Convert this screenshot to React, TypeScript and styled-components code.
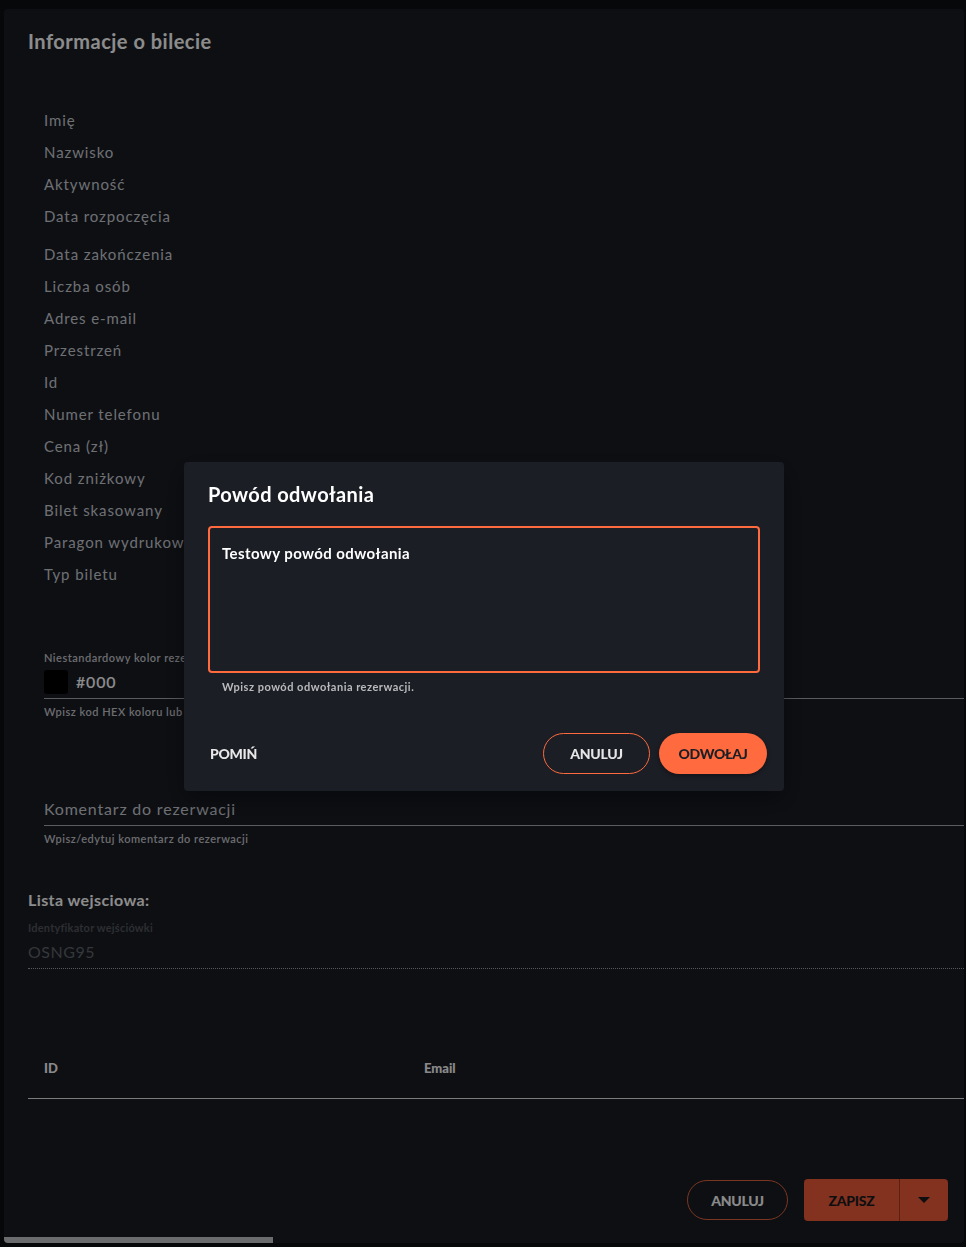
import React from "react";
import styled, { createGlobalStyle } from "styled-components";

const GlobalStyle = createGlobalStyle`
  html, body { margin: 0; padding: 0; background: #0d0f12; }
  body { font-family: Lato, "Noto Sans", "Liberation Sans", sans-serif; }
  * { box-sizing: border-box; }
`;

const Page = styled.div`
  height: 1247px;
  padding: 9px 2px 4px 4px;
  overflow: hidden;
`;

const Panel = styled.main`
  height: 100%;
  background: #1a1c23;
  border-radius: 4px;
  display: flex;
  flex-direction: column;
  overflow: hidden;
`;

const Header = styled.h1`
  margin: 0;
  padding: 20px 24px 0;
  font-size: 20px;
  line-height: 24px;
  font-weight: 700;
  letter-spacing: 0.5px;
  color: #ffffff;
`;

const Details = styled.section`
  margin-top: 51px;
  padding: 0 40px;
  display: flex;
  flex-direction: column;
`;

const DetailRow = styled.div<{ $tall?: boolean }>`
  height: ${(p) => (p.$tall ? 38 : 32)}px;
  display: flex;
  align-items: ${(p) => (p.$tall ? "flex-start" : "center")};
  padding-top: ${(p) => (p.$tall ? 6 : 0)}px;
  font-size: 15px;
  line-height: 20px;
  color: #c8ccd4;
  letter-spacing: 0.9px;
`;

const FieldBlock = styled.div<{ $top: number }>`
  margin-top: ${(p) => p.$top}px;
  padding-left: 40px;
  display: flex;
  flex-direction: column;
`;

const SmallLabel = styled.div`
  font-size: 11px;
  line-height: 14px;
  color: #c3c6cc;
  font-weight: 600;
  letter-spacing: 0.5px;
`;

const InputLine = styled.div`
  display: flex;
  align-items: center;
  gap: 8px;
  margin-top: 5px;
  padding-bottom: 4px;
  border-bottom: 1px solid #a4a8ae;
`;

const Swatch = styled.div<{ $color: string }>`
  width: 24px;
  height: 24px;
  border-radius: 3px;
  background: ${(p) => p.$color};
`;

const InputValue = styled.span`
  font-size: 16px;
  line-height: 20px;
  color: #fbfdff;
  font-weight: 600;
  letter-spacing: 0.8px;
`;

const Helper = styled.div`
  margin-top: 6px;
  font-size: 11px;
  line-height: 14px;
  color: #c3c6cc;
  font-weight: 600;
  letter-spacing: 0.5px;
`;

const Placeholder = styled.div`
  font-size: 16px;
  line-height: 20px;
  color: #c8ccd4;
  letter-spacing: 0.8px;
  padding-bottom: 6px;
  border-bottom: 1px solid #a4a8ae;
`;

const ListSection = styled.section`
  margin-top: 44px;
  padding: 0 0 0 24px;
  display: flex;
  flex-direction: column;
`;

const ListTitle = styled.h2`
  margin: 0;
  font-size: 16px;
  line-height: 20px;
  font-weight: 700;
  letter-spacing: 0.4px;
  color: #ffffff;
`;

const DimLabel = styled.div`
  margin-top: 11px;
  font-size: 11px;
  line-height: 14px;
  color: #51555c;
  font-weight: 700;
  letter-spacing: 0.2px;
`;

const DimValue = styled.div`
  margin-top: 7px;
  font-size: 16px;
  line-height: 20px;
  color: #60656c;
  padding-bottom: 6px;
  border-bottom: 1px dotted #9ca0a8;
  letter-spacing: 0.5px;
`;

const Table = styled.div`
  margin-top: 91px;
  display: grid;
  grid-template-columns: 380px 1fr;
  padding: 0 16px 0 16px;
  height: 39px;
  align-items: start;
  border-bottom: 1px solid #e2e2e2;
`;

const Th = styled.div`
  font-size: 13px;
  line-height: 16px;
  font-weight: 900;
  color: #fafafa;
`;

const Footer = styled.div`
  margin-top: auto;
  display: flex;
  justify-content: flex-end;
  align-items: center;
  gap: 16px;
  padding: 0 16px 16px;
`;

const OutlineButton = styled.button<{ $w: number; $h: number; $dim?: boolean }>`
  width: ${(p) => p.$w}px;
  height: ${(p) => p.$h}px;
  border-radius: ${(p) => p.$h / 2}px;
  border: 1px solid ${(p) => (p.$dim ? "#e0633f" : "#ff6a3e")};
  background: transparent;
  color: ${(p) => (p.$dim ? "#fbfbfb" : "#e6e6e6")};
  font-family: inherit;
  font-size: 14px;
  font-weight: 900;
  letter-spacing: -0.3px;
  text-transform: uppercase;
  cursor: pointer;
`;

const Split = styled.div`
  display: flex;
  height: 42px;
  border-radius: 4px;
  overflow: hidden;
  background: #ef5b39;
`;

const SplitMain = styled.button`
  width: 96px;
  border: 0;
  background: transparent;
  color: #1a1b1f;
  font-family: inherit;
  font-size: 14px;
  font-weight: 900;
  letter-spacing: -0.3px;
  border-right: 1px solid #a93a22;
`;

const SplitCaret = styled.button`
  width: 48px;
  border: 0;
  background: transparent;
  display: flex;
  align-items: center;
  justify-content: center;
`;

const Scrollbar = styled.div`
  height: 6px;
  width: 269px;
  background: #c3c5c9;
  flex-shrink: 0;
`;

const Backdrop = styled.div`
  position: fixed;
  inset: 0;
  background: rgba(0, 0, 0, 0.45);
  display: flex;
  align-items: center;
  justify-content: center;
  padding: 6px 0 0 2px;
`;

const Modal = styled.div`
  width: 600px;
  height: 329px;
  background: #1b1e25;
  border-radius: 4px;
  padding: 20px 24px 17px;
  display: flex;
  flex-direction: column;
  box-shadow: 0 8px 24px rgba(0, 0, 0, 0.4);
`;

const ModalTitle = styled.h3`
  margin: 0;
  font-size: 20px;
  line-height: 24px;
  font-weight: 700;
  letter-spacing: 0.4px;
  color: #ffffff;
`;

const Reason = styled.div`
  margin-top: 20px;
  height: 147px;
  border: 2px solid #ff6a3e;
  border-radius: 4px;
  padding: 16px 12px;
  font-size: 15px;
  line-height: 18px;
  font-weight: 700;
  letter-spacing: 0.4px;
  color: #ffffff;
`;

const ModalHelper = styled.div`
  margin-top: 7px;
  padding-left: 14px;
  font-size: 11px;
  line-height: 14px;
  font-weight: 700;
  letter-spacing: 0.5px;
  color: #b9babd;
`;

const Actions = styled.div`
  margin: auto -7px 0 2px;
  display: flex;
  align-items: center;
  gap: 9px;
`;

const TextButton = styled.button`
  margin-right: auto;
  border: 0;
  padding: 0;
  background: transparent;
  color: #e8e8e8;
  font-family: inherit;
  font-size: 14px;
  font-weight: 900;
  letter-spacing: -0.3px;
`;

const FilledButton = styled.button`
  width: 108px;
  height: 41px;
  border-radius: 21px;
  border: 0;
  background: #ff6a3e;
  color: #1b1e25;
  font-family: inherit;
  font-size: 14px;
  font-weight: 900;
  letter-spacing: -0.3px;
  box-shadow: 0 2px 4px rgba(0, 0, 0, 0.35);
`;

const details: { label: string; tall?: boolean }[] = [
  { label: "Imię" },
  { label: "Nazwisko" },
  { label: "Aktywność" },
  { label: "Data rozpoczęcia", tall: true },
  { label: "Data zakończenia" },
  { label: "Liczba osób" },
  { label: "Adres e-mail" },
  { label: "Przestrzeń" },
  { label: "Id" },
  { label: "Numer telefonu" },
  { label: "Cena (zł)" },
  { label: "Kod zniżkowy" },
  { label: "Bilet skasowany" },
  { label: "Paragon wydrukowany" },
  { label: "Typ biletu" },
];

export default function App() {
  return (
    <>
      <GlobalStyle />
      <Page>
        <Panel>
          <Header>Informacje o bilecie</Header>
          <Details>
            {details.map((d) => (
              <DetailRow key={d.label} $tall={d.tall}>
                {d.label}
              </DetailRow>
            ))}
          </Details>

          <FieldBlock $top={61}>
            <SmallLabel>Niestandardowy kolor rezerwacji</SmallLabel>
            <InputLine>
              <Swatch $color="#000" />
              <InputValue>#000</InputValue>
            </InputLine>
            <Helper>Wpisz kod HEX koloru lub wybierz z palety</Helper>
          </FieldBlock>

          <FieldBlock $top={80}>
            <Placeholder>Komentarz do rezerwacji</Placeholder>
            <Helper>Wpisz/edytuj komentarz do rezerwacji</Helper>
          </FieldBlock>

          <ListSection>
            <ListTitle>Lista wejsciowa:</ListTitle>
            <DimLabel>Identyfikator wejściówki</DimLabel>
            <DimValue>OSNG95</DimValue>
            <Table>
              <Th>ID</Th>
              <Th>Email</Th>
            </Table>
          </ListSection>

          <Footer>
            <OutlineButton $w={101} $h={40} $dim>
              Anuluj
            </OutlineButton>
            <Split>
              <SplitMain>ZAPISZ</SplitMain>
              <SplitCaret aria-label="Więcej">
                <svg width="14" height="8" viewBox="0 0 14 8">
                  <path d="M1 1h12L7 7z" fill="#1a1b1f" />
                </svg>
              </SplitCaret>
            </Split>
          </Footer>
          <Scrollbar />
        </Panel>
      </Page>

      <Backdrop>
        <Modal role="dialog" aria-modal="true">
          <ModalTitle>Powód odwołania</ModalTitle>
          <Reason>Testowy powód odwołania</Reason>
          <ModalHelper>Wpisz powód odwołania rezerwacji.</ModalHelper>
          <Actions>
            <TextButton>POMIŃ</TextButton>
            <OutlineButton $w={107} $h={41}>
              ANULUJ
            </OutlineButton>
            <FilledButton>ODWOŁAJ</FilledButton>
          </Actions>
        </Modal>
      </Backdrop>
    </>
  );
}
